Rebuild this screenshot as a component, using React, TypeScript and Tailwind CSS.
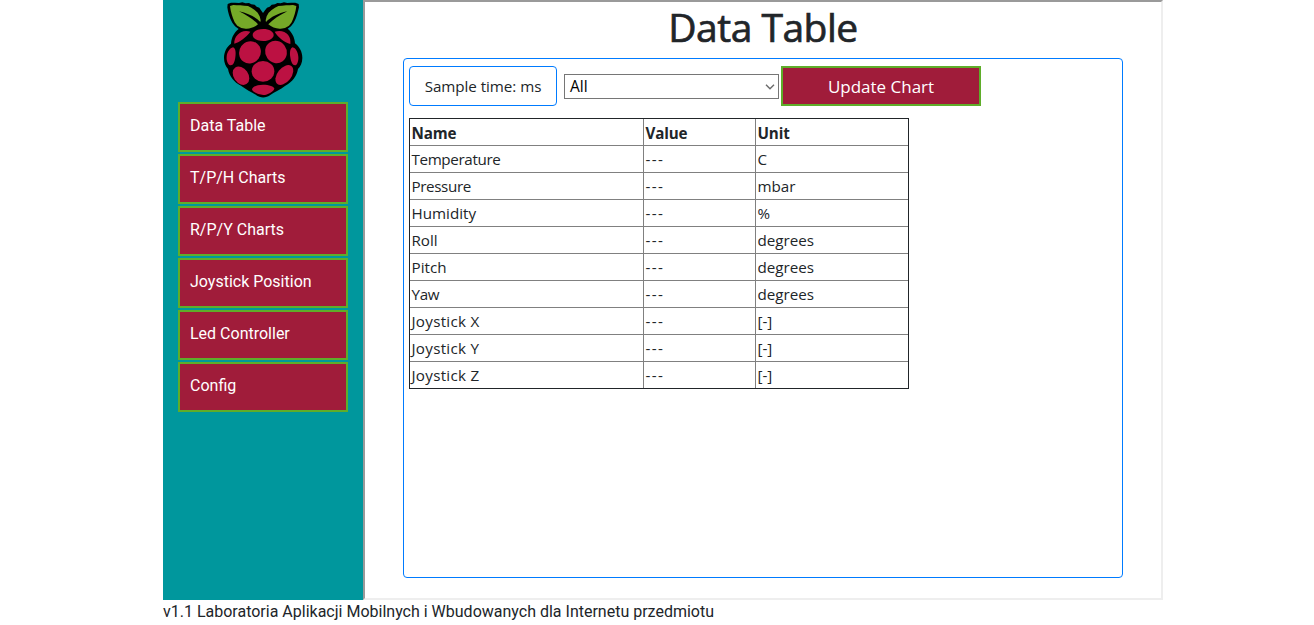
import React from "react";

const menu = ["Data Table", "T/P/H Charts", "R/P/Y Charts", "Joystick Position", "Led Controller", "Config"];

interface Row {
  name: string;
  unit: string;
  tracking?: string;
}

const rows: Row[] = [
  { name: "Temperature", unit: "C", tracking: "tracking-[-0.36px]" },
  { name: "Pressure", unit: "mbar", tracking: "tracking-[-0.38px]" },
  { name: "Humidity", unit: "%" },
  { name: "Roll", unit: "degrees" },
  { name: "Pitch", unit: "degrees" },
  { name: "Yaw", unit: "degrees", tracking: "tracking-[-0.3px]" },
  { name: "Joystick X", unit: "[-]", tracking: "tracking-[0.28px]" },
  { name: "Joystick Y", unit: "[-]", tracking: "tracking-[0.28px]" },
  { name: "Joystick Z", unit: "[-]", tracking: "tracking-[0.28px]" },
];

const cell = "h-[27px] border-r border-b border-[#808080] p-px pl-[1.5px] group-last:h-[26px] group-last:border-b-0 last:border-r-0";

function RaspberryLogo() {
  return (
    <svg viewBox="0 0 300 306" className="mx-auto block h-[102px] w-[100px]" aria-hidden="true">
      <path
        fill="#000"
        d="M88 7 L98 10 L108 9 L115 13 L125 14 L131 20 L139 23 L144 31 L150 39 L156 31 L162 23 L170 20 L176 14 L186 13 L193 9 L203 10 L213 7 L223 9 L235 8 L247 8 L257 12 L258 22 L255 34 L252 45 L248 56 L242 68 L234 79 L224 86 C236 96 245 111 246 130 C259 140 268 155 268 174 C268 189 262 200 255 207 C251 229 238 246 217 257 C202 269 184 276 173 284 C158 295 143 295 128 284 C116 276 98 268 84 257 C63 247 49 229 45 207 C38 199 33 188 33 174 C33 155 41 141 54 131 C55 112 64 97 77 87 L66 79 L58 68 L52 56 L48 45 L45 34 L43 22 L44 12 L54 8 L66 8 L78 9 Z"
      />
      <g fill="#75a928">
        <path d="M51 18 L61 15 L71 16 L82 16 L94 17 L105 18 L115 23 L125 30 L134 38 L140 49 L143 61 L142 66 C127 51 106 40 78 34 C101 45 121 58 135 73 C125 82 111 87 98 86 L85 84 L73 77 L65 67 L60 55 L56 43 L53 31 Z" />
        <path d="M250 18 L240 15 L230 16 L219 16 L207 17 L196 18 L186 23 L176 30 L167 38 L161 49 L158 61 L159 66 C174 51 195 40 223 34 C200 45 180 58 166 73 C176 82 190 87 203 86 L216 84 L228 77 L236 67 L241 55 L245 43 L248 31 Z" />
      </g>
      <g fill="#bc1142">
        <path d="M119 105 C119 95 133 87 151 87 C169 87 182 95 182 105 C182 115 169 123 151 123 C133 123 119 115 119 105 Z" />
        <path d="M112 95 C97 90 83 94 74 104 C66 112 63 122 64 131 C78 127 99 113 112 95 Z" />
        <path d="M185 95 C201 90 217 94 225 104 C232 112 233 123 232 132 C214 126 196 113 185 95 Z" />
        <ellipse cx="111" cy="157" rx="32" ry="34" transform="rotate(36 111 157)" />
        <ellipse cx="189" cy="156" rx="32" ry="34" transform="rotate(-36 189 156)" />
        <ellipse cx="150" cy="214" rx="34" ry="31" />
        <path d="M60 142 C68 145 69 157 67 172 C65 186 61 197 52 196 C44 193 40 181 41 170 C42 156 51 144 60 142 Z" />
        <path d="M239 142 C231 145 230 157 232 172 C234 186 239 197 247 196 C254 193 257 181 256 170 C255 156 248 144 239 142 Z" />
        <ellipse cx="84" cy="227" rx="22" ry="30" transform="rotate(-35 84 227)" />
        <ellipse cx="214" cy="225" rx="21" ry="34" transform="rotate(38 214 225)" />
        <path d="M117 269 C117 260 132 254 150 254 C168 254 184 259 184 266 C181 275 164 285 151 285 C137 284 120 276 117 269 Z" />
      </g>
    </svg>
  );
}

export default function App() {
  return (
    <div className="h-[625px] overflow-hidden bg-white font-['Roboto',sans-serif] text-base text-[#212529]">
      <div className="ml-[163px] w-[1000px]">
        <div className="flex h-[600px]">
          <nav className="w-[200px] bg-[#00979d]">
            <RaspberryLogo />
            <div className="flex flex-col items-center gap-0.5">
              {menu.map((label) => (
                <a
                  key={label}
                  className="block h-[50px] w-[170px] border-2 border-[#5fad2a] bg-[#a01c3a] p-2.5 leading-6 text-white"
                >
                  {label}
                </a>
              ))}
            </div>
          </nav>
          <main className="w-[800px] border-2 border-t-[#9a9a9a] border-r-[#eeeeee] border-b-[#eeeeee] border-l-[#9a9a9a] font-['Open_Sans',sans-serif]">
            <h1 className="h-14 text-center text-[39px] leading-[50px] font-medium tracking-[-0.5px] [-webkit-text-stroke:0.7px_#212529]">
              Data Table
            </h1>
            <section className="mx-auto h-[520px] w-[720px] rounded border border-[#007bff] px-[5px] pt-[7px]">
              <div className="flex h-10 items-center">
                <div className="flex h-10 w-[148px] items-center justify-center rounded border border-[#007bff] text-[15.2px] tracking-[-0.05px]">
                  Sample time: ms
                </div>
                <div className="mt-px ml-[7px] flex h-[25px] w-[215px] items-center justify-between border border-[#767676] pr-[3px] pl-[5px] text-[15.5px] text-black">
                  <span className="pt-px">All</span>
                  <svg viewBox="0 0 10 6" className="h-1.5 w-2.5" fill="none" stroke="#6b6b6b" strokeWidth="1.4">
                    <path d="M1 0.8 L5 4.8 L9 0.8" />
                  </svg>
                </div>
                <button className="ml-0.5 h-10 w-[200px] border-2 border-[#5fad2a] bg-[#a01c3a] pt-px text-[17px] text-white">
                  Update Chart
                </button>
              </div>
              <table className="mt-3 w-[500px] table-fixed border-separate border-spacing-0 border border-[#212529] text-left text-[15.2px] leading-6">
                <colgroup>
                  <col className="w-[234px]" />
                  <col className="w-[112px]" />
                  <col className="w-[152px]" />
                </colgroup>
                <thead>
                  <tr>
                    {["Name", "Value", "Unit"].map((h) => (
                      <th
                        key={h}
                        className="h-[27px] border-r border-b border-[#808080] pt-[2px] pl-[1.5px] font-bold tracking-[-0.15px] last:border-r-0"
                      >
                        {h}
                      </th>
                    ))}
                  </tr>
                </thead>
                <tbody>
                  {rows.map(({ name, unit, tracking = "tracking-normal" }) => (
                    <tr key={name} className="group">
                      <td className={`${cell} ${tracking}`}>{name}</td>
                      <td className={`${cell} tracking-[1.4px]`}>---</td>
                      <td className={cell}>{unit}</td>
                    </tr>
                  ))}
                </tbody>
              </table>
            </section>
          </main>
        </div>
        <footer className="leading-6">v1.1 Laboratoria Aplikacji Mobilnych i Wbudowanych dla Internetu przedmiotu</footer>
      </div>
    </div>
  );
}
